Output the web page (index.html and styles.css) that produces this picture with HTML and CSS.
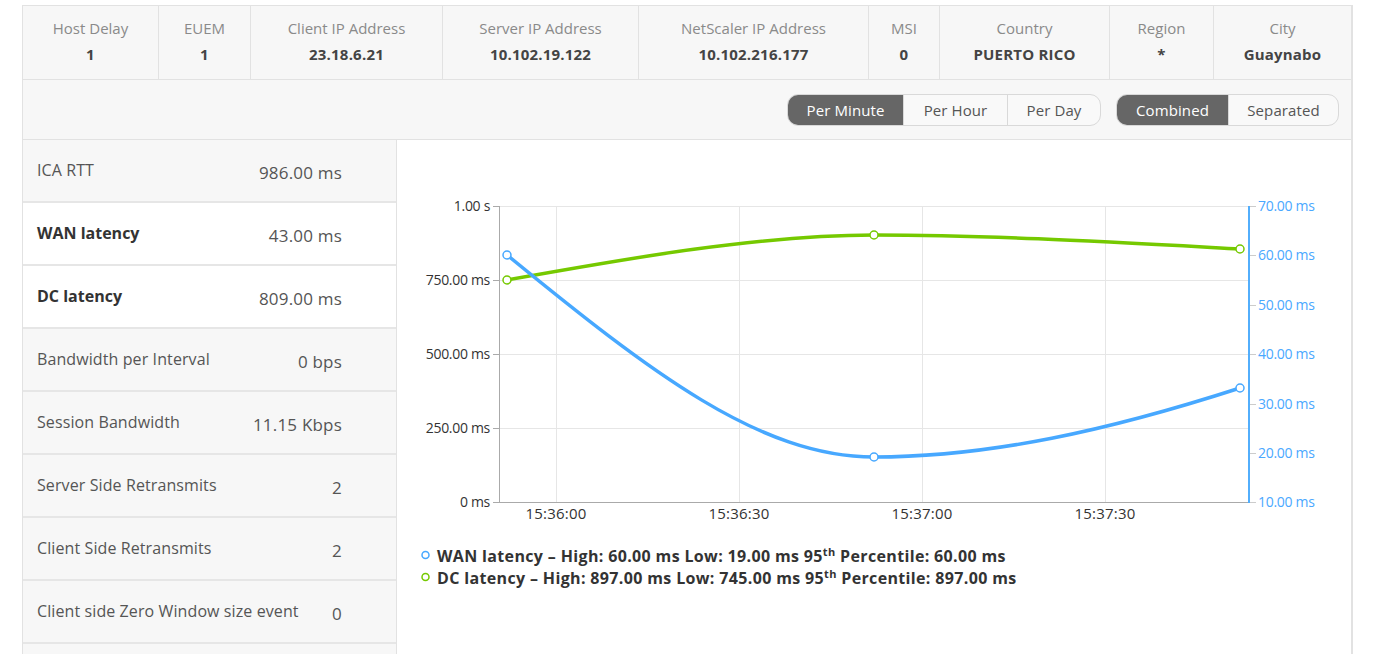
FILE: index.html
```html
<!DOCTYPE html>
<html>
<head>
<meta charset="utf-8">
<link rel="stylesheet" href="styles.css">
</head>
<body>
<div class="panel">
  <div class="summary">
    <div class="cell"><div class="lbl">Host Delay</div><div class="val">1</div></div>
    <div class="cell"><div class="lbl">EUEM</div><div class="val">1</div></div>
    <div class="cell"><div class="lbl">Client IP Address</div><div class="val">23.18.6.21</div></div>
    <div class="cell"><div class="lbl">Server IP Address</div><div class="val">10.102.19.122</div></div>
    <div class="cell"><div class="lbl">NetScaler IP Address</div><div class="val">10.102.216.177</div></div>
    <div class="cell"><div class="lbl">MSI</div><div class="val">0</div></div>
    <div class="cell"><div class="lbl">Country</div><div class="val">PUERTO RICO</div></div>
    <div class="cell"><div class="lbl">Region</div><div class="val">*</div></div>
    <div class="cell last"><div class="lbl">City</div><div class="val">Guaynabo</div></div>
  </div>
  <div class="toolbar">
    <div class="seg seg-time">
      <span class="btn active b-min">Per Minute</span>
      <span class="btn b-hour">Per Hour</span>
      <span class="btn b-day">Per Day</span>
    </div>
    <div class="seg seg-mode">
      <span class="btn active b-comb">Combined</span>
      <span class="btn b-sep">Separated</span>
    </div>
  </div>
  <div class="main">
    <div class="metrics">
      <div class="row"><span class="name">ICA RTT</span><span class="num">986.00 ms</span></div>
      <div class="row sel"><span class="name">WAN latency</span><span class="num">43.00 ms</span></div>
      <div class="row sel"><span class="name">DC latency</span><span class="num">809.00 ms</span></div>
      <div class="row"><span class="name">Bandwidth per Interval</span><span class="num">0 bps</span></div>
      <div class="row"><span class="name">Session Bandwidth</span><span class="num">11.15 Kbps</span></div>
      <div class="row"><span class="name">Server Side Retransmits</span><span class="num">2</span></div>
      <div class="row"><span class="name">Client Side Retransmits</span><span class="num">2</span></div>
      <div class="row"><span class="name">Client side Zero Window size event</span><span class="num">0</span></div>
      <div class="row stub"></div>
    </div>
    <div class="chart">
      <svg class="plot" width="955" height="514" viewBox="397 140 955 514" xmlns="http://www.w3.org/2000/svg">
        <g stroke="#e6e6e6" stroke-width="1">
          <line x1="499" y1="206.5" x2="1249" y2="206.5"/>
          <line x1="499" y1="280.5" x2="1249" y2="280.5"/>
          <line x1="499" y1="354.5" x2="1249" y2="354.5"/>
          <line x1="499" y1="428.5" x2="1249" y2="428.5"/>
          <line x1="556.5" y1="206" x2="556.5" y2="502"/>
          <line x1="739.5" y1="206" x2="739.5" y2="502"/>
          <line x1="922.5" y1="206" x2="922.5" y2="502"/>
          <line x1="1105.5" y1="206" x2="1105.5" y2="502"/>
        </g>
        <g stroke="#aaaaaa" stroke-width="1">
          <line x1="499.5" y1="206" x2="499.5" y2="503"/>
          <line x1="499" y1="502.5" x2="1249" y2="502.5"/>
          <line x1="493" y1="206.5" x2="499" y2="206.5"/>
          <line x1="493" y1="280.5" x2="499" y2="280.5"/>
          <line x1="493" y1="354.5" x2="499" y2="354.5"/>
          <line x1="493" y1="428.5" x2="499" y2="428.5"/>
          <line x1="493" y1="502.5" x2="499" y2="502.5"/>
        </g>
        <g stroke="#cccccc" stroke-width="1">
          <line x1="1250" y1="206.5" x2="1256" y2="206.5"/>
          <line x1="1250" y1="255.5" x2="1256" y2="255.5"/>
          <line x1="1250" y1="305.5" x2="1256" y2="305.5"/>
          <line x1="1250" y1="354.5" x2="1256" y2="354.5"/>
          <line x1="1250" y1="404.5" x2="1256" y2="404.5"/>
          <line x1="1250" y1="453.5" x2="1256" y2="453.5"/>
          <line x1="1250" y1="502.5" x2="1256" y2="502.5"/>
        </g>
        <line x1="1249" y1="206" x2="1249" y2="503" stroke="#52aefc" stroke-width="2"/>
        <g class="ax-left" text-anchor="end">
          <text x="490" y="211">1.00 s</text>
          <text x="490" y="285">750.00 ms</text>
          <text x="490" y="359">500.00 ms</text>
          <text x="490" y="433">250.00 ms</text>
          <text x="490" y="507">0 ms</text>
        </g>
        <g class="ax-right">
          <text x="1258" y="211">70.00 ms</text>
          <text x="1258" y="260">60.00 ms</text>
          <text x="1258" y="310">50.00 ms</text>
          <text x="1258" y="359">40.00 ms</text>
          <text x="1258" y="409">30.00 ms</text>
          <text x="1258" y="458">20.00 ms</text>
          <text x="1258" y="507">10.00 ms</text>
        </g>
        <g class="ax-bottom" text-anchor="middle">
          <text x="556" y="519">15:36:00</text>
          <text x="739" y="519">15:36:30</text>
          <text x="922" y="519">15:37:00</text>
          <text x="1105" y="519">15:37:30</text>
        </g>
        <path d="M507,280 C630,258 760,235 874,235 C990,235 1110,242 1240,249" fill="none" stroke="#75c900" stroke-width="3.5" stroke-linecap="round"/>
        <path d="M507,255 C650,372 760,457 874,457 C990,457 1110,430 1240,388" fill="none" stroke="#47a8ff" stroke-width="3.5" stroke-linecap="round"/>
        <g fill="#ffffff" stroke-width="1.5">
          <circle cx="507" cy="280" r="4" stroke="#75c900"/>
          <circle cx="874" cy="235" r="4" stroke="#75c900"/>
          <circle cx="1240" cy="249" r="4" stroke="#75c900"/>
          <circle cx="507" cy="255" r="4" stroke="#47a8ff"/>
          <circle cx="874" cy="457" r="4" stroke="#47a8ff"/>
          <circle cx="1240" cy="388" r="4" stroke="#47a8ff"/>
        </g>
        <g class="legend">
          <circle cx="425.5" cy="555" r="3.5" fill="#fff" stroke="#47a8ff" stroke-width="1.5"/>
          <text x="437" y="562">WAN latency – High: 60.00 ms Low: 19.00 ms 95<tspan class="sup" dy="-6">th</tspan><tspan dy="6"> Percentile: 60.00 ms</tspan></text>
          <circle cx="425.5" cy="577" r="3.5" fill="#fff" stroke="#75c900" stroke-width="1.5"/>
          <text x="437" y="584">DC latency – High: 897.00 ms Low: 745.00 ms 95<tspan class="sup" dy="-6">th</tspan><tspan dy="6"> Percentile: 897.00 ms</tspan></text>
        </g>
      </svg>
    </div>
  </div>
</div>
</body>
</html>
```
FILE: styles.css
```css
html, body {
  margin: 0;
  padding: 0;
  background: #ffffff;
}
body {
  font-family: "Open Sans", "Liberation Sans", sans-serif;
  color: #333;
  height: 655px;
  overflow: hidden;
}
.panel {
  margin: 5px 0 0 22px;
  width: 1331px;
  border: 1px solid #e2e2e2;
  border-right: 2px solid #e2e2e2;
  border-bottom: none;
  box-sizing: border-box;
}
.summary {
  display: grid;
  grid-template-columns: 136px 92px 192px 196px 230px 71px 170px 104px 1fr;
  height: 74px;
  background: #f7f7f7;
  border-bottom: 1px solid #e2e2e2;
  box-sizing: border-box;
}
.cell {
  border-right: 1px solid #e2e2e2;
  text-align: center;
  padding-top: 12px;
  box-sizing: border-box;
}
.cell.last { border-right: none; }
.lbl {
  font-size: 15px;
  color: #8a8a8a;
  line-height: 20px;
  letter-spacing: 0;
}
.val {
  font-size: 15px;
  font-weight: 700;
  color: #444;
  line-height: 20px;
  margin-top: 6px;
  letter-spacing: 0.2px;
}
.toolbar {
  height: 60px;
  background: #f7f7f7;
  border-bottom: 1px solid #e2e2e2;
  box-sizing: border-box;
  display: flex;
  justify-content: flex-end;
  align-items: flex-start;
  padding: 14px 12px 0 0;
  gap: 15px;
}
.seg {
  display: flex;
  height: 32px;
  border: 1px solid #d9d9d9;
  border-radius: 11px;
  overflow: hidden;
  background: #f9f9f9;
  box-sizing: border-box;
}
.btn {
  display: flex;
  align-items: center;
  justify-content: center;
  font-size: 15px;
  color: #555;
  border-left: 1px solid #d9d9d9;
  letter-spacing: 0.1px;
}
.btn:first-child { border-left: none; }
.btn.active {
  background: #666666;
  color: #fff;
}
.b-min { width: 115px; }
.b-hour { width: 103px; }
.b-day { width: 92px; }
.b-comb { width: 111px; }
.b-sep { width: 109px; }
.main {
  display: flex;
  height: 514px;
  overflow: hidden;
}
.metrics {
  width: 374px;
  flex: none;
  border-right: 1px solid #e2e2e2;
  box-sizing: border-box;
}
.row {
  height: 63px;
  display: flex;
  align-items: center;
  justify-content: space-between;
  padding: 0 54px 0 14px;
  background: #f7f7f7;
  border-bottom: 2px solid #e6e6e6;
  box-sizing: border-box;
  font-size: 16px;
  color: #555;
  letter-spacing: 0.1px;
}
.row.stub {
  height: 10px;
  border-bottom: none;
}
.row .name { margin-top: -1px; }
.row .num {
  margin-top: 3px;
  font-size: 17px;
  letter-spacing: 0.2px;
}
.row.sel {
  background: #ffffff;
}
.row.sel .name {
  font-weight: 700;
  color: #333;
  letter-spacing: 0;
}
.chart {
  flex: 1;
  background: #fff;
}
.plot {
  display: block;
  font-family: "Open Sans", "Liberation Sans", sans-serif;
}
.ax-left text {
  font-size: 14px;
  fill: #333;
  letter-spacing: -0.3px;
}
.ax-bottom text {
  font-size: 15px;
  fill: #333;
  letter-spacing: 0.2px;
}
.ax-right text {
  font-size: 14px;
  fill: #4aa8ff;
  letter-spacing: -0.3px;
}
.legend text {
  font-size: 16px;
  font-weight: 700;
  fill: #333;
  letter-spacing: 0.35px;
}
.legend .sup {
  font-size: 11px;
}
```
